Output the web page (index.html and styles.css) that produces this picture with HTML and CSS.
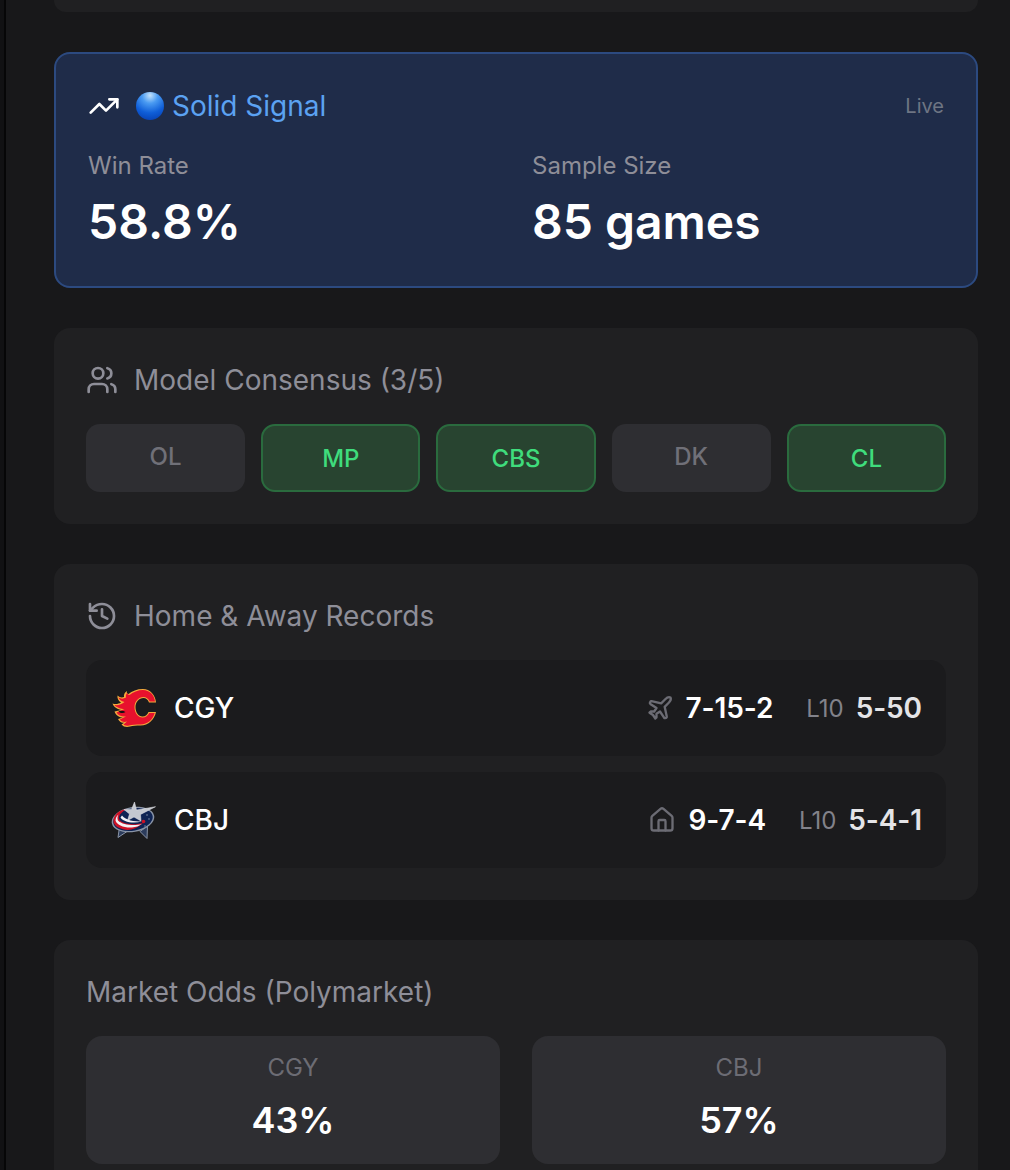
FILE: index.html
```html
<!DOCTYPE html>
<html lang="en">
<head>
<meta charset="utf-8">
<title>Game signal</title>
<link rel="stylesheet" href="styles.css">
</head>
<body>
<div class="shell">
  <aside class="rail"></aside>
  <main class="main">
    <div class="card stub"></div>

    <section class="signal">
      <div class="signal-head">
        <div class="signal-title">
          <svg class="icon icon-white" viewBox="0 0 24 24"><polyline points="22 7 13.5 15.5 8.5 10.5 2 17"/><polyline points="16 7 22 7 22 13"/></svg>
          <span class="orb"></span>
          <span class="signal-name">Solid Signal</span>
        </div>
        <span class="live">Live</span>
      </div>
      <div class="stats">
        <div>
          <div class="stat-label">Win Rate</div>
          <div class="stat-value">58.8%</div>
        </div>
        <div>
          <div class="stat-label">Sample Size</div>
          <div class="stat-value">85 games</div>
        </div>
      </div>
    </section>

    <section class="card">
      <h2 class="card-title">
        <svg class="icon" viewBox="0 0 24 24"><path d="M16 21v-2a4 4 0 0 0-4-4H6a4 4 0 0 0-4 4v2"/><circle cx="9" cy="7" r="4"/><path d="M22 21v-2a4 4 0 0 0-3-3.87"/><path d="M16 3.13a4 4 0 0 1 0 7.75"/></svg>
        Model Consensus (3/5)
      </h2>
      <div class="models">
        <div class="model">OL</div>
        <div class="model on">MP</div>
        <div class="model on">CBS</div>
        <div class="model">DK</div>
        <div class="model on">CL</div>
      </div>
    </section>

    <section class="card">
      <h2 class="card-title">
        <svg class="icon" viewBox="0 0 24 24"><path d="M3 12a9 9 0 1 0 9-9 9.75 9.75 0 0 0-6.74 2.74L3 8"/><path d="M3 3v5h5"/><path d="M12 7v5l4 2"/></svg>
        Home &amp; Away Records
      </h2>
      <div class="rows">
        <div class="row">
          <div class="team">
            <svg class="logo logo-cgy" viewBox="0 0 48 48">
              <path class="flame-outer" d="M46 18.500H39C38 15.500 36 14 33.500 14C29 14 25.500 18 25.500 23C25.500 28.500 28.500 32.500 32.500 32.500C35.500 32.500 37.500 30.700 38.500 28H46C44.500 35.500 38.500 41.500 30.500 41.500C26 41.500 23 41.500 20 42.500C17 43.500 13.500 43 11.500 40.500L14.500 38.500C12 39.500 9.500 38 8 35L13 33.500C9.500 33.500 6 31.500 4.500 27.500L11.500 26C8 25.500 4 23.500 2.500 19.500C5.500 20.500 8.500 20 11 18.500C8.500 17 7 14.500 7.500 11.500C9.500 13.500 12 14 14 13C13.500 11 14.500 8.500 17 7C16.500 9 17 10 18.500 10C22 7 27 5 33 5C40 5 45.500 11 46 18.500Z"/>
              <path class="flame-red" d="M45 17.500H39.700C38.500 14.500 36 13 33.500 13C28.500 13 24.500 17.500 24.500 23C24.500 29 28 33.500 32.500 33.500C35.500 33.500 38 31.700 39.200 29H44.700C43 35.500 37.500 40.500 30.500 40.500C25.500 40.500 22 40.500 19 41.500C16.500 42 14.500 41.500 13.500 40.500L17 37.500C14 38.500 11 37.500 9.800 35.500L16 32.500C12 33 8 31.500 6.500 28.500L14.500 25C11 25 6.500 23.500 4.500 21C8 21.500 12 20.500 14.500 18C11.500 17 9 15.500 8.500 13.500C11 15 13.500 15 16 13.500C15.500 11.500 16 10 17.500 8.800C17.500 10.200 18 11 19.500 11C23 8 28 6 33 6C39.500 6 44.500 11 45 17.500Z"/>
              <path class="flame-slit" d="M8.500 27.500C10.500 26.500 13 26.500 15.500 28C13.500 29.500 10.500 29.500 8.500 27.500Z"/>
            </svg>
            <span class="abbr">CGY</span>
          </div>
          <div class="record">
            <svg class="mini" viewBox="0 0 24 24"><path d="M17.800 19.200 16 11l3.500-3.500C21 6 21.500 4 21 3c-1-.5-3 0-4.500 1.500L13 8 4.800 6.200c-.5-.1-.9.1-1.100.5l-.3.5c-.2.5-.1 1 .3 1.300L9 12l-2 3H4l-1 1 3 2 2 3 1-1v-3l3-2 3.500 5.300c.3.400.8.500 1.300.300l.5-.2c.4-.3.600-.7.500-1.200z"/></svg>
            <span class="rec-main">7-15-2</span>
            <span class="l10">L10</span>
            <span class="rec-l10">5-50</span>
          </div>
        </div>
        <div class="row">
          <div class="team">
            <svg class="logo" viewBox="0 0 48 48">
              <path class="cbj-spike" d="M9.500 31L8 41.500L17 35.500Z"/>
              <path class="cbj-spike" d="M30 35.500L37 42.500L37.500 30Z"/>
              <g class="cbj-tilt">
                <ellipse class="cbj-ring" cx="23" cy="23.500" rx="21.500" ry="12.500"/>
                <ellipse class="cbj-navy" cx="23" cy="23.500" rx="20" ry="11.200"/>
              </g>
              <path class="cbj-red" d="M3.500 25C3.500 18.500 10 13.500 17 13C12 15.500 8.500 19 9 22.500C10 27 20 30 33 27C27 32.500 20 35 14 33.500C7.500 32 3.500 29 3.500 25Z"/>
              <path class="cbj-white" d="M5.500 24.500C6.500 29 14 32 22 31.500C26 31.200 29 30 32 28C25 30 13 29.500 8 24.500C7 22.500 7.500 20 8.500 18.500C6.500 20 5.500 22.500 5.500 24.500Z"/>
              <path class="cbj-white" d="M10.500 21.500C12.500 25.500 22 28 32 25.500C24 25.500 16 24.500 12 19.500Z"/>
              <path class="cbj-star" d="M24.500 6L26.500 14L45.500 10.700L30.500 18.500L31 25L24 21L17.500 24.500L19.500 18L14 13.500L21.500 13.500Z"/>
              <circle class="cbj-dot" cx="33.500" cy="25.500" r="1.800"/>
              <circle class="cbj-speck" cx="37" cy="19" r=".7"/>
              <circle class="cbj-speck" cx="39" cy="23" r=".7"/>
              <circle class="cbj-speck" cx="35" cy="30" r=".7"/>
            </svg>
            <span class="abbr">CBJ</span>
          </div>
          <div class="record">
            <svg class="mini" viewBox="0 0 24 24"><path d="M15 21v-8a1 1 0 0 0-1-1h-4a1 1 0 0 0-1 1v8"/><path d="M3 10a2 2 0 0 1 .709-1.528l7-5.999a2 2 0 0 1 2.582 0l7 5.999A2 2 0 0 1 21 10v9a2 2 0 0 1-2 2H5a2 2 0 0 1-2-2z"/></svg>
            <span class="rec-main">9-7-4</span>
            <span class="l10">L10</span>
            <span class="rec-l10">5-4-1</span>
          </div>
        </div>
      </div>
    </section>

    <section class="card">
      <h2 class="card-title">Market Odds (Polymarket)</h2>
      <div class="odds">
        <div class="odd"><div class="odd-team">CGY</div><div class="odd-value">43%</div></div>
        <div class="odd"><div class="odd-team">CBJ</div><div class="odd-value">57%</div></div>
      </div>
    </section>
  </main>
</div>
</body>
</html>
```
FILE: styles.css
```css
* { box-sizing: border-box; }
html, body { margin: 0; height: 1170px; overflow: hidden; background: #18181a; }
body { font-family: Inter, "Liberation Sans", sans-serif; color: #fff; }
.shell { display: flex; height: 1170px; overflow: hidden; }
.rail { width: 6px; flex: none; background: #111113; border-right: 2px solid #060607; }
.main { flex: 1; padding: 0 32px 0 48px; display: flex; flex-direction: column; gap: 40px; }

.card { flex: none; background: #202022; border-radius: 16px; padding: 32px; }
.stub { height: 12px; padding: 0; border-radius: 0 0 16px 16px; }

.signal { flex: none; background: #1f2c49; border: 2px solid #2c4a80; border-radius: 16px; padding: 32px; }
.signal-head { display: flex; justify-content: space-between; align-items: center; height: 40px; margin-bottom: 24px; }
.signal-title { display: flex; align-items: center; gap: 16px; }
.signal-name { font-size: 28px; color: #5ba2f2; margin-left: -8px; }
.live { font-size: 20px; color: #6e7583; }
.orb { width: 28px; height: 28px; border-radius: 50%; background: radial-gradient(circle at 50% 12%, #c4e2fa 0%, #4a9bf2 28%, #0f5ed8 62%, #0438a8 100%); }
.stats { display: grid; grid-template-columns: 1fr 1fr; gap: 32px; }
.stat-label { font-size: 24px; line-height: 32px; margin-bottom: 8px; color: #8e8e98; }
.stat-value { font-size: 48px; line-height: 64px; font-weight: 600; }

.icon { width: 32px; height: 32px; flex: none; fill: none; stroke: #8e8e98; stroke-width: 2; stroke-linecap: round; stroke-linejoin: round; }
.icon-white { stroke: #fff; }
.card-title { display: flex; align-items: center; gap: 16px; margin: 0 0 24px; height: 40px; font-size: 28px; font-weight: 400; color: #8e8e98; }

.models { display: grid; grid-template-columns: repeat(5, 1fr); gap: 16px; }
.model { height: 68px; padding-bottom: 4px; display: flex; align-items: center; justify-content: center; background: #2e2e32; border-radius: 14px; font-size: 24px; font-weight: 500; color: #707078; }
.model.on { padding-bottom: 0; background: #284430; border: 2px solid #2a6b3e; color: #3fdc7c; }

.rows { display: flex; flex-direction: column; gap: 16px; }
.row { height: 96px; display: flex; align-items: center; justify-content: space-between; padding: 0 24px; background: #1b1b1d; border-radius: 16px; }
.team { display: flex; align-items: center; gap: 16px; }
.logo { width: 48px; height: 48px; flex: none; }
.abbr { font-size: 28px; font-weight: 500; }
.record { display: flex; align-items: center; }
.mini { width: 28px; height: 28px; fill: none; stroke: #6c6c74; stroke-width: 2; stroke-linecap: round; stroke-linejoin: round; margin-right: 12px; }
.rec-main { font-size: 28px; font-weight: 600; letter-spacing: -.1px; margin-right: 33px; }
.l10 { font-size: 24px; color: #82828a; margin-right: 12px; }
.rec-l10 { font-size: 28px; font-weight: 600; letter-spacing: -.1px; color: #e4e4e7; }

.flame-outer { fill: #f4a93c; }
.flame-red { fill: #e8112d; }
.flame-slit { fill: #111; }
.cbj-spike { fill: #2c3c5c; stroke: #8a94a6; stroke-width: 1; }
.cbj-tilt { transform: rotate(-10deg); transform-origin: 23px 23.5px; }
.cbj-ring { fill: #8a94a6; }
.cbj-navy { fill: #0f2454; }
.cbj-red { fill: #ce1126; }
.cbj-white { fill: #f2f2f5; }
.cbj-star { fill: #c4c8d0; stroke: #e8e8ec; stroke-width: .5; }
.cbj-dot { fill: #ce1126; }
.cbj-speck { fill: #9aa4b8; }

.odds { display: grid; grid-template-columns: 1fr 1fr; gap: 32px; }
.odd { background: #2e2e32; border-radius: 16px; padding: 16px 0 24px; text-align: center; }
.odd-team { font-size: 24px; line-height: 32px; color: #6c6c74; }
.odd-value { font-size: 36px; line-height: 40px; font-weight: 600; margin-top: 16px; }
```
